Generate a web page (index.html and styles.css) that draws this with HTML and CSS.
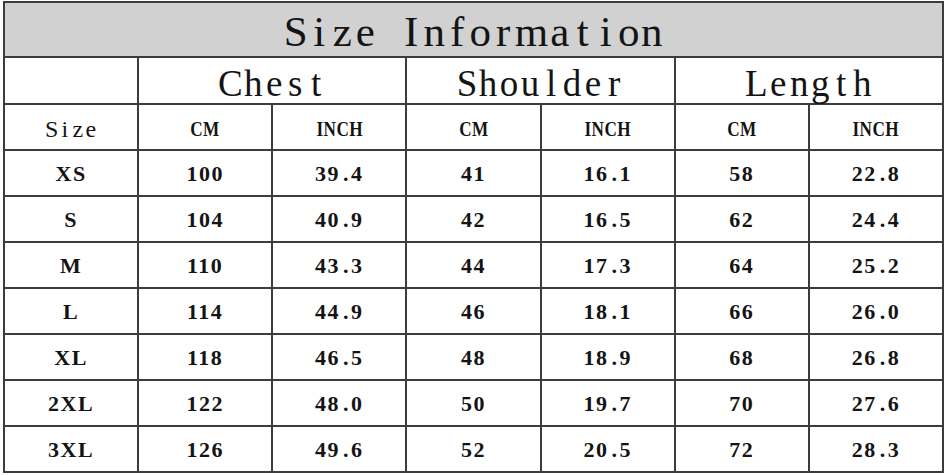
FILE: index.html
```html
<!DOCTYPE html>
<html>
<head>
<meta charset="utf-8">
<link rel="stylesheet" href="styles.css">
</head>
<body>
<div class="sheet">
  <div class="cell title"><span class="ch">S</span><span class="ch">i</span><span class="ch">z</span><span class="ch">e</span><span class="ch"> </span><span class="ch">I</span><span class="ch">n</span><span class="ch">f</span><span class="ch">o</span><span class="ch">r</span><span class="ch">m</span><span class="ch">a</span><span class="ch">t</span><span class="ch">i</span><span class="ch">o</span><span class="ch">n</span></div>
  <div class="cell blank"></div>
  <div class="cell group"><span class="ch">C</span><span class="ch">h</span><span class="ch">e</span><span class="ch">s</span><span class="ch">t</span></div>
  <div class="cell group"><span class="ch">S</span><span class="ch">h</span><span class="ch">o</span><span class="ch">u</span><span class="ch">l</span><span class="ch">d</span><span class="ch">e</span><span class="ch">r</span></div>
  <div class="cell group"><span class="ch">L</span><span class="ch">e</span><span class="ch">n</span><span class="ch">g</span><span class="ch">t</span><span class="ch">h</span></div>
  <div class="cell sub plain"><span class="ch">S</span><span class="ch">i</span><span class="ch">z</span><span class="ch">e</span></div>
  <div class="cell sub"><span class="narrow">CM</span></div>
  <div class="cell sub"><span class="narrow">INCH</span></div>
  <div class="cell sub"><span class="narrow">CM</span></div>
  <div class="cell sub"><span class="narrow">INCH</span></div>
  <div class="cell sub"><span class="narrow">CM</span></div>
  <div class="cell sub"><span class="narrow">INCH</span></div>

  <div class="cell data">XS</div><div class="cell data">100</div><div class="cell data">39<span class="dot">.</span>4</div><div class="cell data">41</div><div class="cell data">16<span class="dot">.</span>1</div><div class="cell data">58</div><div class="cell data">22<span class="dot">.</span>8</div>
  <div class="cell data">S</div><div class="cell data">104</div><div class="cell data">40<span class="dot">.</span>9</div><div class="cell data">42</div><div class="cell data">16<span class="dot">.</span>5</div><div class="cell data">62</div><div class="cell data">24<span class="dot">.</span>4</div>
  <div class="cell data">M</div><div class="cell data">110</div><div class="cell data">43<span class="dot">.</span>3</div><div class="cell data">44</div><div class="cell data">17<span class="dot">.</span>3</div><div class="cell data">64</div><div class="cell data">25<span class="dot">.</span>2</div>
  <div class="cell data">L</div><div class="cell data">114</div><div class="cell data">44<span class="dot">.</span>9</div><div class="cell data">46</div><div class="cell data">18<span class="dot">.</span>1</div><div class="cell data">66</div><div class="cell data">26<span class="dot">.</span>0</div>
  <div class="cell data">XL</div><div class="cell data">118</div><div class="cell data">46<span class="dot">.</span>5</div><div class="cell data">48</div><div class="cell data">18<span class="dot">.</span>9</div><div class="cell data">68</div><div class="cell data">26<span class="dot">.</span>8</div>
  <div class="cell data">2XL</div><div class="cell data">122</div><div class="cell data">48<span class="dot">.</span>0</div><div class="cell data">50</div><div class="cell data">19<span class="dot">.</span>7</div><div class="cell data">70</div><div class="cell data">27<span class="dot">.</span>6</div>
  <div class="cell data">3XL</div><div class="cell data">126</div><div class="cell data">49<span class="dot">.</span>6</div><div class="cell data">52</div><div class="cell data">20<span class="dot">.</span>5</div><div class="cell data">72</div><div class="cell data">28<span class="dot">.</span>3</div>
</div>
</body>
</html>
```

FILE: styles.css
```css
html, body {
  margin: 0;
  padding: 0;
  background: #ffffff;
}

body {
  padding: 1px 0 0 3px;
}

.sheet {
  width: 941px;
  box-sizing: border-box;
  display: grid;
  grid-template-columns: repeat(7, 1fr);
  grid-template-rows: 53px 45px 44px repeat(7, 44px);
  gap: 2px;
  border: 2px solid #3c3c3c;
  background: #3c3c3c;
  font-family: "Liberation Serif", "DejaVu Serif", serif;
  color: #141414;
}

.cell {
  background: #ffffff;
  display: flex;
  align-items: center;
  justify-content: center;
  white-space: pre;
  line-height: 1;
}

.ch {
  display: inline-block;
  text-align: center;
}

.title {
  grid-column: 1 / 8;
  background: #d1d1d1;
  font-size: 43px;
  padding-top: 3px;
}

.title .ch {
  min-width: 23px;
}

.group {
  grid-column: span 2;
  font-size: 37px;
  padding-top: 6px;
}

.group .ch {
  min-width: 21px;
}

.sub {
  font-size: 22px;
  font-weight: bold;
  padding-top: 3px;
}

.narrow {
  display: inline-block;
  transform: scaleX(0.78);
  letter-spacing: 0.5px;
}

.sub.plain {
  font-weight: normal;
  font-size: 24px;
}

.sub.plain .ch {
  min-width: 13px;
}

.data {
  font-size: 22px;
  font-weight: bold;
  letter-spacing: 1.5px;
  padding-top: 2px;
}

.dot {
  display: inline-block;
  width: 11px;
  text-align: left;
  padding-left: 3px;
  box-sizing: border-box;
}
```
